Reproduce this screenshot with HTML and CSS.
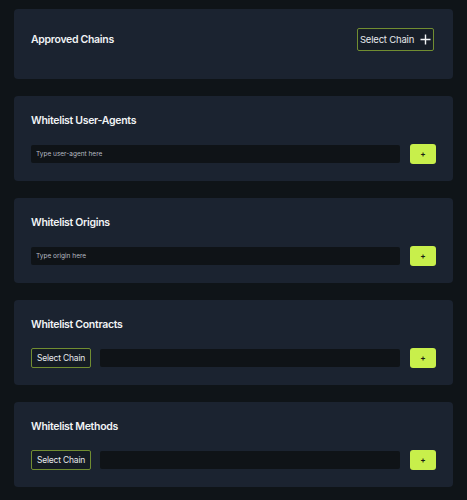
FILE: index.html
```html
<!DOCTYPE html>
<html>
<head>
<meta charset="utf-8">
<link rel="stylesheet" href="styles.css">
</head>
<body>
<div class="page">
  <section class="card card-head">
    <h2 class="title">Approved Chains</h2>
    <button class="chain-btn chain-btn-lg">Select Chain
      <svg class="plus-ico" width="11" height="11" viewBox="0 0 11 11"><path d="M5.5 0.5v10M0.5 5.5h10" stroke="#f2f4f5" stroke-width="1.4" fill="none"/></svg>
    </button>
  </section>
  <section class="card">
    <h2 class="title">Whitelist User-Agents</h2>
    <div class="row">
      <input class="field" placeholder="Type user-agent here">
      <button class="add">+</button>
    </div>
  </section>
  <section class="card">
    <h2 class="title">Whitelist Origins</h2>
    <div class="row">
      <input class="field" placeholder="Type origin here">
      <button class="add">+</button>
    </div>
  </section>
  <section class="card">
    <h2 class="title">Whitelist Contracts</h2>
    <div class="row">
      <button class="chain-btn">Select Chain</button>
      <input class="field">
      <button class="add">+</button>
    </div>
  </section>
  <section class="card">
    <h2 class="title">Whitelist Methods</h2>
    <div class="row">
      <button class="chain-btn">Select Chain</button>
      <input class="field">
      <button class="add">+</button>
    </div>
  </section>
</div>
</body>
</html>
```
FILE: styles.css
```css
html, body {
  margin: 0;
  padding: 0;
  background: #0f1418;
}
body {
  font-family: Inter, "Noto Sans", sans-serif;
  color: #f1f3f5;
}
.page {
  padding: 9px 14px 13px;
  display: flex;
  flex-direction: column;
  gap: 17px;
}
.card {
  background: #1b2330;
  border-radius: 4px;
  padding: 17px 17px 17px 17px;
}
.card-head {
  height: 70px;
  box-sizing: border-box;
  padding: 0 19px 9px 17px;
  display: flex;
  align-items: center;
  justify-content: space-between;
}
.title {
  margin: 0;
  font-size: 10.5px;
  line-height: 16px;
  font-weight: 600;
  letter-spacing: -0.3px;
}
.card .title + .row {
  margin-top: 15px;
}
.row {
  display: flex;
  align-items: center;
  height: 20px;
}
.chain-btn {
  font-family: inherit;
  background: #151c24;
  color: #e6e9ec;
  border: 1px solid #718d31;
  border-radius: 2px;
  height: 20px;
  width: 60px;
  padding: 0;
  font-size: 8.5px;
  margin-right: 9px;
  flex: none;
  letter-spacing: -0.2px;
}
.chain-btn-lg {
  width: 77px;
  height: 23px;
  margin: 0;
  font-size: 9.5px;
  display: flex;
  align-items: center;
  justify-content: center;
  gap: 6px;
  background: #171e28;
}
.plus-ico {
  display: block;
}
.field {
  flex: 1;
  min-width: 0;
  height: 18px;
  box-sizing: border-box;
  background: #0f1317;
  border: none;
  border-radius: 2px;
  padding: 0 5px;
  font-family: inherit;
  font-size: 6.5px;
  color: #e0e3e6;
  outline: none;
}
.field::placeholder {
  color: #b7bcc2;
}
.add {
  flex: none;
  margin-left: 10px;
  width: 26px;
  height: 20px;
  padding: 0;
  border: none;
  border-radius: 3px;
  background: #c8ef4b;
  color: #1a1f14;
  font-family: inherit;
  font-size: 8px;
  font-weight: 700;
}
```
